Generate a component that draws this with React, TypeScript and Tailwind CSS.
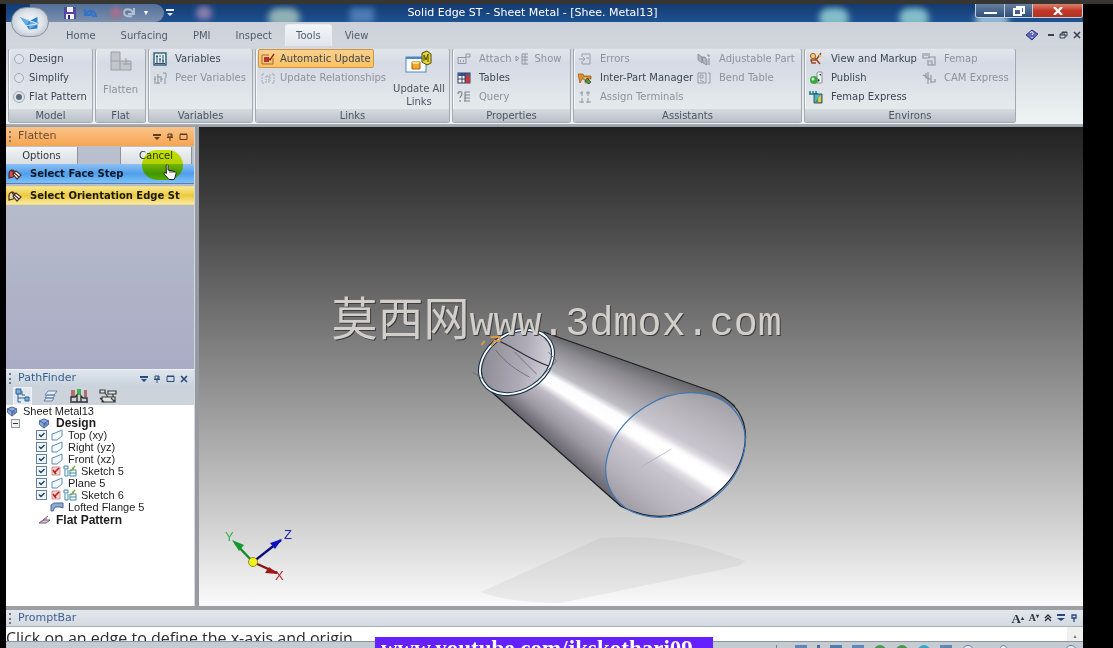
import React, { useState } from "react";

type IconProps = { name: string; className?: string };

const SmallIcon: React.FC<IconProps> = ({ name, className = "h-[14px] w-[14px]" }) => {
  const props = { viewBox: "0 0 14 14", className: `${className} shrink-0`, fill: "none", "aria-hidden": true };
  switch (name) {
    case "variables":
      return (
        <svg {...props}>
          <rect x="1" y="1" width="12" height="12" fill="#e4f0f5" stroke="#2c5d74" strokeWidth="1.4" />
          <path d="M4 3v8M3 4.5h2M7 3v2M7 6.5v4M6 7h2M10 3v8M9 9h2M2 11.5h10" stroke="#28516b" />
        </svg>
      );
    case "peer":
      return (
        <svg {...props} stroke="#8b939d">
          <path d="M2 5v8M5 3v10M8 5v6M10 2h3v5M12 7v6M1 8h2M4 6h3M7 8h3M3 12h4" />
        </svg>
      );
    case "auto":
      return (
        <svg {...props}>
          <path d="M1 3v9h11V6M1 3h7" stroke="#a5673a" />
          <rect x="3" y="5" width="5" height="5" fill="#b83232" />
          <path d="M7 6l2 2 4-6" stroke="#8c2d1c" strokeWidth="1.4" />
        </svg>
      );
    case "relations":
      return (
        <svg {...props} stroke="#a3abb4">
          <path d="M1 3h2M1 3v9h2M11 3h2M13 3v9h-2M5 5h3v4H5zM9 3v7M4 11h5" strokeDasharray="2 1" />
        </svg>
      );
    case "attach":
      return (
        <svg {...props} stroke="#8e96a0">
          <path d="M1 5.500h8v6H1zM3.500 8v2M6.500 8v2M9 2h4v3H9z" />
        </svg>
      );
    case "show":
      return (
        <svg {...props} stroke="#8e96a0">
          <path d="M1 4v5l3-2.500zM7 2h6M7 5h6M7 8h6M7 12h6M7 2v10M10 2v10" />
        </svg>
      );
    case "tables":
      return (
        <svg {...props}>
          <rect x="1" y="2" width="12" height="10" fill="#fff" stroke="#303c68" />
          <path d="M1 2h12v3H1z" fill="#38589a" />
          <path d="M8 4h5v8H8z" fill="#bc3c3c" />
          <path d="M5 2v10M8 2v10M1 8h7" stroke="#303c68" />
        </svg>
      );
    case "query":
      return (
        <svg {...props} stroke="#7d858f">
          <path d="M1 4c0-3 4-3 4-.5C5 6 3 6 3 8M3 10v2M8 2h5M8 5h5M8 8h5M7 11h6M8 2v9" strokeWidth="1.2" />
        </svg>
      );
    case "errors":
      return (
        <svg {...props} stroke="#98a0aa">
          <path d="M4 2h8v10H4V9M4 5V2M1 7h5M5 5l2 2-2 2M8 6h3" />
        </svg>
      );
    case "interpart":
      return (
        <svg {...props}>
          <path d="M0 3h5l1 2h7v3H4l-2 4z" fill="#e0912c" stroke="#9a4e12" strokeWidth=".7" />
          <path d="M5 6h5v6H7V8H5z" fill="#f4d765" stroke="#8a5a1c" strokeWidth=".6" />
          <path d="M9 7l4 4-2 2-4-3z" fill="#4d9b3a" stroke="#222" strokeWidth=".6" />
        </svg>
      );
    case "assign":
      return (
        <svg {...props} stroke="#8e96a0">
          <path d="M4 1v5M10 1v5M2 3h3M8 3h4M4 8v5M10 8v5M1 12h5M8 12h5" />
        </svg>
      );
    case "adjust":
      return (
        <svg {...props}>
          <path d="M1 2l4 3v6L1 8zM5 5h3l2 3v5L6 11z" fill="#aeb6bf" stroke="#818994" strokeWidth=".8" />
          <path d="M11 2v2M13 4h-2M12 6v3M11 10h2M12 11v2" stroke="#818994" />
        </svg>
      );
    case "bend":
      return (
        <svg {...props} stroke="#929aa4">
          <path d="M1 2h8v10H1zM3 4h3v3H3zM3 9l4 2M11 2h2M13 2v10h-2" />
        </svg>
      );
    case "markup":
      return (
        <svg {...props}>
          <circle cx="4" cy="4" r="2.6" fill="#f0c98c" stroke="#a16023" />
          <path d="M6 6l5 6M12 1L7 8H2l1 3h4" stroke="#9c4a20" strokeWidth="1.5" />
          <path d="M10 2l3 2-3 2z" fill="#e7c243" />
        </svg>
      );
    case "publish":
      return (
        <svg {...props}>
          <path d="M9 1h4v11H8V2z" fill="#eef1f5" stroke="#767e88" strokeWidth=".8" />
          <circle cx="5" cy="9" r="4" fill="#3fa647" />
          <circle cx="4" cy="8" r="1.5" fill="#c7efc3" />
          <path d="M9 8l2 1-2 2zM10 3h2v2" fill="#333" />
        </svg>
      );
    case "femapx":
      return (
        <svg {...props}>
          <path d="M0 4h9M1 1v3M4 1v3M7 1v3" stroke="#157f8a" strokeWidth="1.500" />
          <path d="M5 4h8v9H5z" fill="#4db7c3" stroke="#333" strokeWidth=".8" />
          <path d="M6 12l6-7v7z" fill="#f2c53a" />
          <path d="M6 12l3-4v4z" fill="#3e9a48" />
        </svg>
      );
    case "femap":
      return (
        <svg {...props} stroke="#8c949e">
          <path d="M1 1v5h6V1M3 1v3M5 1v3M7 5h6v8H6V8M7 9h3v4" strokeWidth="1.1" />
        </svg>
      );
    default:
      return (
        <svg {...props} stroke="#8c949e">
          <path d="M1 4l4 2M4 2v5h3M6 1v12M9 4v8M6 8h3M9 11h4v-3" strokeWidth="1.1" />
        </svg>
      );
  }
};

type Command = { icon: string; label: string; off?: boolean };

const CommandButton: React.FC<Command & { className?: string }> = ({ icon, label, off, className = "gap-2 px-1" }) => (
  <button
    disabled={off}
    className={`flex h-[19px] items-center whitespace-nowrap ${off ? "text-[#8d939b]" : "text-[#3d4651]"} ${className}`}
  >
    <SmallIcon name={icon} />
    {label}
  </button>
);

const Group: React.FC<{ title: string; className: string; children: React.ReactNode }> = ({ title, className, children }) => (
  <section
    className={`flex shrink-0 flex-col overflow-hidden rounded-[3px] border border-[#a2a9b3] border-t-[#d5dae0] bg-linear-to-b from-[#e2e6ec] via-[#d6dae4] via-20% to-[#e9efef] shadow-[inset_1px_0_0_#f4f7f9] ${className}`}
  >
    <div className="flex-1">{children}</div>
    <h2 className="h-[13px] bg-linear-to-b from-[#d6dbe0] to-[#bac0c8] text-center leading-[13px] text-[#4c5560]">{title}</h2>
  </section>
);

const tabs = ["Home", "Surfacing", "PMI", "Inspect", "Tools", "View"];
const modes = ["Design", "Simplify", "Flat Pattern"];

const TitleBar: React.FC = () => (
  <header className="relative flex h-[18px] shrink-0 items-center justify-center overflow-hidden bg-linear-to-b from-[#153b70] to-[#1d5293] pr-6">
    <div className="absolute inset-y-0 left-6 flex w-[134px] items-center gap-2 rounded-r-full bg-linear-to-b from-[#516f99] to-[#7b90ae] pl-[34px]">
      <button aria-label="Save">
        <svg viewBox="0 0 12 12" className="h-3 w-3">
          <path d="M0 0h12v12H0z" fill="#5346a3" />
          <path d="M3 0h6v5H3zM2 7h8v5H2z" fill="#f3f4ff" />
          <path d="M4 8h2v4H4z" fill="#322868" />
        </svg>
      </button>
      <button aria-label="Undo">
        <svg viewBox="0 0 14 12" className="h-3 w-[14px]" fill="none" stroke="#2e73c9" strokeWidth="2">
          <path d="M1 2v6h6M2 7c3-5 9-5 10 3M5 3l5 7" />
        </svg>
      </button>
      <span className="ml-1 h-3 w-3 rounded-full bg-[#a0708c] blur-[2px]" />
      <button aria-label="Redo" className="-ml-2">
        <svg viewBox="0 0 14 12" className="h-3 w-[14px]" fill="none" stroke="#b3bfd0" strokeWidth="2">
          <path d="M12 1v6H6M11 6C9 1 2 1 2 6c0 3 5 4 8 3" />
        </svg>
      </button>
      <span className="text-[8px] text-white">▾</span>
    </div>
    <svg viewBox="0 0 8 8" className="absolute left-[160px] h-2 w-2" fill="#e5ebf3" aria-hidden>
      <path d="M0 0h8v2H0zM1 4h6L4 7z" />
    </svg>
    <span className="absolute left-[190px] h-[14px] w-4 rounded-full bg-[#8a7fae] blur-[3px]" />
    <span className="absolute top-1 left-[262px] h-5 w-8 rounded-full bg-[#8fb0b4] blur-[3px]" />
    <span className="absolute top-1 left-[344px] h-4 w-6 bg-[#4d7cb4] blur-[3px]" />
    <span className="absolute top-1 right-[234px] h-5 w-[30px] rounded-full bg-[#82bdca] blur-[3px]" />
    <span className="absolute top-1 right-[154px] h-5 w-[30px] rounded-full bg-[#82bdca] blur-[3px]" />
    <span className="absolute top-2 right-[74px] h-4 w-[34px] rounded-full bg-[#8fb7d0] blur-[3px]" />
    <h1 className="text-[11px] text-white">Solid Edge ST - Sheet Metal - [Shee. Metal13]</h1>
    <div className="absolute top-0 right-0 flex h-[14px] overflow-hidden rounded-b-[3px] border border-t-0 border-[#c3cfdf]">
      <button aria-label="Minimize" className="flex w-[29px] items-end justify-center border-r border-[#c3cfdf] bg-linear-to-b from-[#66809f] to-[#2f4f79] pb-[3px]">
        <span className="h-[2px] w-[13px] bg-white" />
      </button>
      <button aria-label="Restore" className="flex w-[28px] items-center justify-center border-r border-[#c3cfdf] bg-linear-to-b from-[#66809f] to-[#2f4f79]">
        <svg viewBox="0 0 12 10" className="h-[10px] w-3" fill="none" stroke="#fff" strokeWidth="2">
          <path d="M4 3V1h7v6H9M1 3h7v6H1z" />
        </svg>
      </button>
      <button aria-label="Close" className="flex w-[49px] items-center justify-center bg-linear-to-b from-[#d98270] via-[#c2382a] to-[#b5321f]">
        <svg viewBox="0 0 10 8" className="h-2 w-[10px]" stroke="#fff" strokeWidth="2.4">
          <path d="M1 0l8 8M9 0L1 8" />
        </svg>
      </button>
    </div>
  </header>
);

const TabRow: React.FC<{ tab: string; onSelect: (t: string) => void }> = ({ tab, onSelect }) => (
  <nav className="flex h-[24px] shrink-0 items-end justify-between bg-linear-to-b from-[#ccd1d9] to-[#d2d7de]">
    <div className="flex h-[22px] gap-px pl-[48px]">
      {tabs.map((t) => (
        <button
          key={t}
          onClick={() => onSelect(t)}
          className={
            t === tab
              ? "rounded-t-[3px] border border-b-0 border-[#e9eef3] bg-linear-to-b from-[#f2f5f8] to-[#e2e6ec] px-[10px] text-[#515d6b]"
              : "px-[12px] text-[#515d6b]"
          }
        >
          {t}
        </button>
      ))}
    </div>
    <div className="flex h-[22px] items-center gap-[5px] pr-[2px]">
      <button aria-label="Help">
        <svg viewBox="0 0 14 12" className="mr-1 h-3 w-[14px]">
          <path d="M1 6l6-5 6 4-6 6z" fill="#6468b9" stroke="#323b89" />
          <path d="M5 4c1-2 4-1 3 1L7 6M7 8v1" stroke="#fff" fill="none" />
        </svg>
      </button>
      <button aria-label="Minimize document" className="h-[2px] w-[6px] bg-[#39424f]" />
      <button aria-label="Restore document">
        <svg viewBox="0 0 9 8" className="h-2 w-[9px]" fill="none" stroke="#39424f">
          <path d="M3 3V1h5v4H6M1 3h5v4H1zM1 4h5M3 1.5h5" />
        </svg>
      </button>
      <button aria-label="Close document">
        <svg viewBox="0 0 8 8" className="h-2 w-2" stroke="#39424f" strokeWidth="1.6">
          <path d="M1 1l6 6M7 1L1 7" />
        </svg>
      </button>
    </div>
  </nav>
);

const Ribbon: React.FC = () => {
  const [mode, setMode] = useState("Flat Pattern");

  return (
    <div className="flex h-[80px] shrink-0 gap-[2px] overflow-hidden border-b-2 border-[#a3aab3] bg-linear-to-b from-[#d0d5dc] to-[#eff5f4] px-[2px] pt-[2px] pb-px">
      <Group title="Model" className="w-[85px]">
        {modes.map((m) => (
          <label key={m} className="flex h-[19px] items-center gap-[5px] pl-[5px] whitespace-nowrap text-[#3d4651]">
            <input
              type="radio"
              name="model"
              checked={mode === m}
              onChange={() => setMode(m)}
              className="h-[10px] w-[10px] shrink-0 appearance-none rounded-full border border-[#a3abb6] bg-[#dfe4ea] checked:border-2 checked:border-[#dfe4ea] checked:bg-[#5b6878] checked:outline checked:outline-[#a3abb6]"
            />
            {m}
          </label>
        ))}
      </Group>
      <Group title="Flat" className="w-[51px]">
        <button disabled className="flex w-full flex-col items-center pt-[2px] text-[#8d939b]">
          <svg viewBox="0 0 26 22" className="h-[22px] w-[26px]" fill="#c2c6cb" stroke="#999ea6">
            <path d="M3 1h9v9h11v9H3zM12 10v9M12 10H3M18 7v7M15 13h8" />
          </svg>
          <span className="mt-[9px]">Flatten</span>
        </button>
      </Group>
      <Group title="Variables" className="w-[105px]">
        <CommandButton icon="variables" label="Variables" />
        <CommandButton icon="peer" label="Peer Variables" off />
      </Group>
      <Group title="Links" className="w-[195px]">
        <div className="flex items-start justify-between pl-[2px]">
          <div>
            <CommandButton
              icon="auto"
              label="Automatic Update"
              className="gap-[5px] rounded-[2px] border border-[#cf9540] bg-linear-to-b from-[#f9d08d] to-[#fbc362] px-[2px]"
            />
            <CommandButton icon="relations" label="Update Relationships" off className="gap-[5px] px-[3px]" />
          </div>
          <button className="flex w-[60px] shrink-0 flex-col items-center pt-px text-[#4b545f]">
            <svg viewBox="0 0 28 24" className="h-6 w-7">
              <rect x="1" y="7" width="20" height="15" fill="#fdfeff" stroke="#4c88bd" />
              <path d="M1 7h20v2H1z" fill="#4c88bd" />
              <path d="M7 12h8v7H7z" fill="#f5a72a" stroke="#a4620d" />
              <path d="M7 12h8l-2 2H8z" fill="#ffdf84" />
              <path d="M17 3l5-2 4 3v9l-4 2-5-3z" fill="#e5d52c" stroke="#4d4a12" />
              <path d="M19 11V5l2 5 2-6v8" fill="none" stroke="#4d4a12" />
            </svg>
            <span className="mt-[8px] leading-[13px]">
              Update All
              <br />
              Links
            </span>
          </button>
        </div>
      </Group>
      <Group title="Properties" className="w-[119px]">
        <div className="flex">
          <CommandButton icon="attach" label="Attach" off />
          <CommandButton icon="show" label="Show" off className="gap-[5px]" />
        </div>
        <CommandButton icon="tables" label="Tables" />
        <CommandButton icon="query" label="Query" off />
      </Group>
      <Group title="Assistants" className="w-[229px]">
        <div className="flex">
          <div className="w-[119px]">
            <CommandButton icon="errors" label="Errors" off />
            <CommandButton icon="interpart" label="Inter-Part Manager" />
            <CommandButton icon="assign" label="Assign Terminals" off />
          </div>
          <div>
            <CommandButton icon="adjust" label="Adjustable Part" off />
            <CommandButton icon="bend" label="Bend Table" off />
          </div>
        </div>
      </Group>
      <Group title="Environs" className="w-[212px]">
        <div className="flex">
          <div className="w-[113px]">
            <CommandButton icon="markup" label="View and Markup" />
            <CommandButton icon="publish" label="Publish" />
            <CommandButton icon="femapx" label="Femap Express" />
          </div>
          <div>
            <CommandButton icon="femap" label="Femap" off />
            <CommandButton icon="cam" label="CAM Express" off />
          </div>
        </div>
      </Group>
    </div>
  );
};

const Grip: React.FC = () => <span className="h-[11px] w-0 border-l-2 border-dotted border-[#6d7683]" />;

const PaneControls: React.FC<{ color: string; closable?: boolean }> = ({ color, closable }) => (
  <div className={`ml-auto flex items-center gap-[5px] ${color}`}>
    <button aria-label="Pane menu">
      <svg viewBox="0 0 8 8" className="h-2 w-2" fill="currentColor"><path d="M0 1h8v2H0zM1 4h6L4 7z" /></svg>
    </button>
    <button aria-label="Pin pane">
      <svg viewBox="0 0 8 8" className="h-2 w-2" fill="none" stroke="currentColor"><path d="M2 1h4v3H2zM1 4.500h6M4 5v3M5 1v3" /></svg>
    </button>
    <button aria-label="Float pane">
      <svg viewBox="0 0 9 8" className="h-2 w-[9px]" fill="none" stroke="currentColor"><path d="M1 1.500h7v5H1zM1 1h7" /></svg>
    </button>
    {closable && (
      <button aria-label="Close pane">
        <svg viewBox="0 0 8 8" className="h-2 w-2" stroke="currentColor" strokeWidth="1.6"><path d="M1 1l6 6M7 1L1 7" /></svg>
      </button>
    )}
  </div>
);

const StepIcon: React.FC<{ color: string }> = ({ color }) => (
  <svg viewBox="0 0 14 12" className="h-3 w-[14px] shrink-0" fill="none" stroke="#4d3029" strokeWidth="1.200">
    <path d="M1 10V6c0-3 2-4 4-4l3 3-3 4z" fill={color} />
    <path d="M5 6l3-3 5 4-4 4z" fill="#fff" />
    <path d="M3 2l8 7" />
  </svg>
);

const FlattenPane: React.FC = () => (
  <section className="flex flex-1 flex-col bg-linear-to-b from-[#bcc2cd] to-[#aaacc5]">
    <div className="flex h-[19px] items-center gap-[7px] bg-linear-to-b from-[#fac388] to-[#f6a550] pr-[6px] pl-[3px] text-[11px] text-[#6a4c30]">
      <Grip />
      Flatten
      <PaneControls color="text-[#5d3d1d]" />
    </div>
    <div className="relative flex h-[18px] justify-between pt-px pr-[2px] text-[#30363e]">
      <button className="w-[72px] border-r border-[#8c929b] bg-linear-to-b from-[#f3f5f7] to-[#d9dee2]">Options</button>
      <button className="w-[72px] border-x border-[#8c929b] bg-linear-to-b from-[#f3f5f7] to-[#d9dee2]">Cancel</button>
      <span className="pointer-events-none absolute top-[4px] right-[11px] z-10 h-[30px] w-[41px] rounded-full bg-[#d2f000] mix-blend-multiply" />
      <svg viewBox="0 0 14 16" className="pointer-events-none absolute top-[18px] right-[17px] z-20 h-4 w-[14px]">
        <path d="M3 1.500q1.500-1.500 2 0V6l7 1.500q1 .5 1 2l-1 4-1 2H6L1 10q-.5-1.500 1-1.500l1.500 1z" fill="#fff" stroke="#222" />
        <path d="M7 6v3M9 6.500V9M11 7v2" stroke="#222" strokeWidth=".8" />
      </svg>
    </div>
    <button className="flex h-[20px] items-center gap-2 overflow-hidden border-b border-[#5a81a8] bg-linear-to-b from-[#8dc0f5] via-[#4f9fec] to-[#7cc0f8] pl-[2px] font-bold whitespace-nowrap text-[#0c1624]">
      <StepIcon color="#d9484e" />
      Select Face Step
    </button>
    <button className="mt-[2px] flex h-[19px] items-center gap-2 overflow-hidden border-y border-[#f0dc90] bg-linear-to-b from-[#f8e98c] via-[#ecc93a] to-[#f8eb9c] pl-[2px] font-bold whitespace-nowrap text-[#1c1809]">
      <StepIcon color="#e9dca0" />
      Select Orientation Edge St
    </button>
  </section>
);

const nodes = [
  { label: "Top (xy)", kind: "plane" },
  { label: "Right (yz)", kind: "plane" },
  { label: "Front (xz)", kind: "plane" },
  { label: "Sketch 5", kind: "sketch" },
  { label: "Plane 5", kind: "plane" },
  { label: "Sketch 6", kind: "sketch" },
];

const PartIcon: React.FC = () => (
  <svg viewBox="0 0 12 12" className="h-[11px] w-3 shrink-0" stroke="#365491" strokeWidth=".9">
    <path d="M1 3l5-2 5 2v4l-5 4-5-4z" fill="#8dabdc" />
    <path d="M1 3l5 3 5-3M6 6v5" fill="none" />
    <path d="M6 7l3-1v2z" fill="#fff" />
  </svg>
);

const PathFinder: React.FC = () => (
  <section className="flex h-[237px] shrink-0 flex-col bg-white">
    <div className="flex h-[18px] items-center gap-[7px] border-t border-[#eef1f5] bg-linear-to-b from-[#dfe5ec] to-[#c9d2dd] pr-[6px] pl-[3px] text-[11px] text-[#385f8f]">
      <Grip />
      PathFinder
      <PaneControls color="text-[#284a7b]" closable />
    </div>
    <div className="flex h-[18px] items-center gap-[11px] bg-[#cdd3db] pl-[7px]">
      <button aria-label="Tree" className="border border-[#eef2f6] bg-[#e1e8ef]">
        <svg viewBox="0 0 17 16" className="h-4 w-[17px]" fill="#79abd9" stroke="#2d6192">
          <path d="M2 1h5v5H2zM11 9h4v4h-4z" />
          <path d="M4 6v8M4 10h7M4 14h3M8 3v4h3" fill="none" />
        </svg>
      </button>
      <button aria-label="Layers">
        <svg viewBox="0 0 16 14" className="h-[14px] w-4" fill="#e8eef8" stroke="#6780a9">
          <path d="M5 2h9l-3 4H2zM4 6h8l-2 3H2zM3 9h8l-2 3H1z" />
        </svg>
      </button>
      <button aria-label="Sensors">
        <svg viewBox="0 0 18 14" className="h-[14px] w-[18px]">
          <path d="M1 1h4v7H1z" fill="#b26c6c" /><path d="M7 0h4v6H7z" fill="#3db34b" /><path d="M14 1h3v7h-3z" fill="#b26c6c" />
          <path d="M1 12V8h4l2-2v7M11 13V7l2 2h4v4M0 13h18" fill="none" stroke="#333" strokeWidth="1.400" />
        </svg>
      </button>
      <button aria-label="Playback">
        <svg viewBox="0 0 18 14" className="h-[14px] w-[18px]" fill="#e5e5e0" stroke="#35383c" strokeWidth="1.200">
          <path d="M1 1h5v3H1zM9 2h8v3H9zM3 8h13v5H3zM6 4l3 4M14 5v3M1 9l4 4M12 9l4 4" />
        </svg>
      </button>
    </div>
    <ul className="flex-1 font-['Liberation_Sans',sans-serif] text-[11px] leading-[12px] text-[#1d1d1d]">
      <li className="flex h-[12px] items-center gap-[5px]"><PartIcon />Sheet Metal13</li>
      <li className="flex h-[12px] items-center pl-[5px] text-[12px] font-bold">
        <button aria-label="Collapse Design" className="mr-[18px] flex h-[9px] w-[9px] items-center justify-center border border-[#8f969e] bg-[#eff1f3]">
          <span className="h-px w-[5px] bg-[#333]" />
        </button>
        <PartIcon />
        <span className="ml-[6px]">Design</span>
      </li>
      {nodes.map((n) => (
        <li key={n.label} className="h-[12px]">
          <label className="flex h-[12px] items-center gap-[4px] pl-[30px]">
            <span className="relative h-[10px] w-[11px] shrink-0">
              <input type="checkbox" defaultChecked className="peer block h-[10px] w-[11px] appearance-none border border-[#64809c] bg-[#eef6fa]" />
              <svg viewBox="0 0 11 10" className="pointer-events-none absolute inset-0 hidden h-[10px] w-[11px] peer-checked:block" fill="none" stroke="#23415c" strokeWidth="1.500">
                <path d="M3 4.500l2 2L8.500 3" />
              </svg>
            </span>
            {n.kind === "plane" ? (
              <svg viewBox="0 0 12 12" className="mr-px h-3 w-3 shrink-0" fill="#f5faff" stroke="#5e8cb8">
                <path d="M1 5l3-1 7-3v6l-5 4H1z" />
              </svg>
            ) : (
              <svg viewBox="0 0 26 12" className="h-3 w-[26px] shrink-0" fill="none">
                <path d="M1 2h8v8H1z" fill="#f7dada" stroke="#cf7373" strokeWidth=".8" />
                <path d="M3 8l5-5M2 5l3 4" stroke="#bd1c1c" strokeWidth="1.600" />
                <path d="M13 1h4v3h-4zM14 5v6h3V5M19 11V5h6v6zM22 5V2M19 8h6" stroke="#4187a8" />
                <path d="M20 6l4-5" stroke="#90ad32" strokeWidth="1.500" />
              </svg>
            )}
            {n.label}
          </label>
        </li>
      ))}
      <li className="flex h-[12px] items-center gap-[4px] pl-[44px]">
        <svg viewBox="0 0 14 10" className="h-[10px] w-[14px] shrink-0" fill="#92a9cf" stroke="#48669c">
          <path d="M1 3l3-2h9v5l-3-1H5L3 9H1z" />
        </svg>
        Lofted Flange 5
      </li>
      <li className="flex h-[13px] items-center gap-[5px] pl-[32px] text-[12px] font-bold">
        <svg viewBox="0 0 13 10" className="h-[10px] w-[13px] shrink-0" fill="#d9cfe5" stroke="#6a5787">
          <path d="M1 8l4-3h7L8 8zM5 5l5-4" /><path d="M3 7l6-4" stroke="#c56a4a" />
        </svg>
        Flat Pattern
      </li>
    </ul>
  </section>
);

// shading across the cone, from the upper silhouette (0) to the lower one (1)
const shade = [
  [0, 104, 103, 106],
  [0.12, 136, 135, 140],
  [0.28, 168, 166, 172],
  [0.4, 190, 188, 196],
  [0.46, 252, 252, 255],
  [0.56, 255, 255, 255],
  [0.64, 192, 188, 198],
  [0.82, 156, 152, 162],
  [1, 98, 96, 104],
];

const shadeAt = (t: number) => {
  const i = Math.max(1, shade.findIndex((s) => s[0] >= t));
  const a = shade[i - 1];
  const b = shade[i];
  const k = (t - a[0]) / (b[0] - a[0]);
  return `rgb(${[1, 2, 3].map((c) => Math.round(a[c] + (b[c] - a[c]) * k)).join(",")})`;
};

const STRIPS = 90;
const near = (t: number) => [552 - 58 * t, 335 + 58 * t];
const far = (t: number) => {
  const [x, y] = near(t);
  return [x + (728 - 113 * t - x) * 1.8, y + (397 + 109 * t - y) * 1.8];
};

const strips = Array.from({ length: STRIPS }, (_, i) => {
  const t0 = i === 0 ? -0.1 : i / STRIPS;
  const t1 = i === STRIPS - 1 ? 1.1 : (i + 1.6) / STRIPS;
  return {
    fill: shadeAt((i + 0.5) / STRIPS),
    points: [near(t0), far(t0), far(t1), near(t1)].map((p) => p.join(",")).join(" "),
  };
});

const glare = [near(0.46), far(0.46), far(0.57), near(0.57)].map((p) => p.join(",")).join(" ");

const ConeModel: React.FC = () => (
  <svg viewBox="199 127 883 479" className="absolute inset-0 h-full w-full" role="img" aria-label="Lofted flange">
    <defs>
      <clipPath id="cone">
        <path d="M543 332L716 393L735 405L640 514L620 506L489 390Z" />
        <ellipse cx="675" cy="455" rx="74" ry="57" transform="rotate(-32 675 455)" />
      </clipPath>
      <clipPath id="opening">
        <ellipse cx="675" cy="455" rx="74" ry="57" transform="rotate(-32 675 455)" />
      </clipPath>
      <filter id="soft" x="-10%" y="-10%" width="120%" height="120%">
        <feGaussianBlur stdDeviation="2" />
      </filter>
      <linearGradient id="mouth" x1="490" y1="340" x2="540" y2="385" gradientUnits="userSpaceOnUse">
        <stop offset="0" stopColor="#8d8b93" />
        <stop offset=".6" stopColor="#aeabb7" />
        <stop offset="1" stopColor="#d2d0d8" />
      </linearGradient>
      <linearGradient id="shadow" x1="0" y1="537" x2="0" y2="603" gradientUnits="userSpaceOnUse">
        <stop offset="0" stopColor="#cfcfcf" />
        <stop offset="1" stopColor="#ececec" />
      </linearGradient>
    </defs>
    <path d="M480 592L600 538Q650 534 700 546L745 561L738 566L560 603Q510 603 480 592Z" fill="url(#shadow)" />
    <g clipPath="url(#cone)">
      {strips.map((s, i) => (
        <polygon key={i} points={s.points} fill={s.fill} />
      ))}
    </g>
    <g clipPath="url(#opening)">
      <ellipse cx="675" cy="455" rx="74" ry="57" transform="rotate(-32 675 455)" fill="#d2ced7" fillOpacity=".5" />
      <polygon points={glare} fill="#fff" filter="url(#soft)" />
    </g>
    <path d="M543 332L716 393Q745 408 745 437C744 470 722 494 694 508C667 521 643 518 620 506L489 390" fill="none" stroke="#1b2027" strokeWidth="1.300" />
    <ellipse cx="675" cy="455" rx="74" ry="57" transform="rotate(-32 675 455)" fill="none" stroke="#3f78b5" strokeWidth="1.200" />
    <path d="M642 466L671 449" stroke="#a9a6af" strokeWidth=".7" />
    <ellipse cx="516" cy="362" rx="39" ry="29" transform="rotate(-32 516 362)" fill="url(#mouth)" stroke="#17324b" strokeWidth="4" />
    <ellipse cx="516" cy="362" rx="39" ry="29" transform="rotate(-32 516 362)" fill="none" stroke="#fff" strokeWidth="1.800" />
    <path d="M496 340C512 346 525 358 548 366" fill="none" stroke="#2c2c33" strokeWidth="1.100" />
    <path d="M495 350C504 362 517 371 529 377M514 352L536 374M472 372L484 380M548 352L556 361L542 376" fill="none" stroke="#65646e" strokeWidth=".8" />
    <path d="M490 337h9v4h-5l-3 5M481 345l3-4" fill="none" stroke="#d99846" strokeWidth="2" />
  </svg>
);

const AxisTriad: React.FC = () => (
  <svg viewBox="0 0 76 56" className="absolute bottom-[22px] left-[22px] h-[56px] w-[76px]" strokeWidth="2.400">
    <path d="M32 34L14 15" stroke="#168a2d" /><path d="M11 12l12 5-5 6z" fill="#15992d" />
    <path d="M32 34L60 12" stroke="#0a0a80" /><path d="M61 11l-12 4 5 6z" fill="#0e12c4" />
    <path d="M32 34L56 45" stroke="#841616" /><path d="M57 46l-13-1 4-6z" fill="#a11515" />
    <circle cx="32" cy="34" r="4.500" fill="#f3f024" stroke="#8f9410" strokeWidth="1" />
    <g className="font-['Liberation_Sans',sans-serif] text-[13px]">
      <text x="4" y="13" fill="#36b34a">Y</text>
      <text x="63" y="11" fill="#2524a0">Z</text>
      <text x="54" y="52" fill="#b82222">X</text>
    </g>
  </svg>
);

const PromptBar: React.FC = () => (
  <footer className="shrink-0 border-t-4 border-[#9c9fa4] bg-white">
    <div className="flex h-[17px] items-center gap-[7px] border-b border-[#aab0b8] bg-linear-to-b from-[#e3e8ed] to-[#d4dae0] pr-[5px] pl-[3px] text-[11px] text-[#3f5f93]">
      <Grip />
      PromptBar
      <div className="ml-auto flex items-center gap-[5px] font-['Liberation_Serif',serif] text-[#28303c]">
        <button className="text-[13px] leading-none font-bold">A<sup className="text-[6px]">▴</sup></button>
        <button className="text-[10px] leading-none font-bold">A<sup className="text-[6px]">▾</sup></button>
        <button aria-label="Collapse">
          <svg viewBox="0 0 8 8" className="h-2 w-2" fill="none" stroke="currentColor" strokeWidth="1.300"><path d="M1 4l3-3 3 3M1 7l3-3 3 3" /></svg>
        </button>
        <button aria-label="Prompt menu" className="text-[#254883]">
          <svg viewBox="0 0 8 8" className="h-2 w-2" fill="currentColor"><path d="M0 0h8v2H0zM0 4h8L4 7z" /></svg>
        </button>
        <button aria-label="Pin prompt" className="text-[#254883]">
          <svg viewBox="0 0 8 8" className="h-2 w-2" fill="none" stroke="currentColor" strokeWidth="1.300"><path d="M2 1h4v3H2zM4 4v4" /></svg>
        </button>
      </div>
    </div>
    <div className="flex h-[14px] justify-between overflow-hidden">
      <p className="font-['Open_Sans',sans-serif] text-[16px] leading-[22px] whitespace-nowrap text-[#2b2b2b]">
        Click on an edge to define the x-axis and origin
      </p>
      <span className="w-4 bg-[#f0f0ee] pt-1 text-center text-[6px] text-[#777]">▴</span>
    </div>
    <div className="flex h-[7px] items-start overflow-hidden border-t border-[#8f959d] bg-[#c5cbd3] pt-[3px]">
      <div className="ml-auto flex gap-[10px] pr-[6px]">
        <span className="mr-2 h-3 w-px bg-[#7a828c]" />
        <span className="h-3 w-3 bg-[#5e86b8]" />
        <span className="h-3 w-[3px] bg-[#4c6f9e]" />
        <span className="h-3 w-3 bg-[#4f7daf]" />
        <span className="h-3 w-3 bg-[#5e86b8]" />
        <span className="h-3 w-3 rounded-full bg-[#4b9a50]" />
        <span className="h-3 w-3 rounded-full bg-[#4a9452]" />
        <span className="h-3 w-3 rounded-full bg-[#35a5c7]" />
        <span className="h-3 w-3 bg-[#6185b1]" />
        <span className="h-3 w-3 rounded-full border border-[#657f9f] bg-[#e6edf4]" />
        <span className="ml-4 h-3 w-[7px] rounded-t border border-[#657f9f] bg-white" />
        <span className="ml-[48px] h-3 w-3 rounded-full border border-[#657f9f] bg-[#e6edf4]" />
      </div>
    </div>
  </footer>
);

const App: React.FC = () => {
  const [tab, setTab] = useState("Tools");

  return (
    <div className="relative h-screen overflow-hidden border-t-4 border-[#383632] bg-black pr-[30px] pl-[6px] font-['DejaVu_Sans',sans-serif] text-[10px]">
      <div className="relative flex h-full flex-col overflow-hidden">
        <TitleBar />
        <TabRow tab={tab} onSelect={setTab} />
        <button
          aria-label="Application menu"
          className="absolute top-[3px] left-[5px] h-[30px] w-[38px] rounded-full border border-[#8590a0] bg-radial from-[#fafcff] via-[#dfe4ea] to-[#a5afbb]"
        >
          <svg viewBox="0 0 38 30" className="h-full w-full">
            <path d="M8 9l11 4 8-4v13l-9 1z" fill="#3580c5" />
            <path d="M8 9l11 4-4 6zM19 13l10 3-11 7z" fill="#64ace4" />
            <path d="M8 9l19 8M19 13l8-4M15 19l12-2" stroke="#dff0fb" fill="none" />
          </svg>
        </button>
        <Ribbon />
        <main className="flex min-h-0 flex-1 bg-[#969aa1] pt-px">
          <aside className="flex w-[189px] shrink-0 flex-col border-r border-[#d5d8dd]">
            <FlattenPane />
            <PathFinder />
          </aside>
          <div className="relative ml-[4px] flex-1 overflow-hidden bg-linear-to-b from-[#222] via-[#777] via-42% to-[#fafafa]">
            <ConeModel />
            <AxisTriad />
            <p className="absolute top-[35%] left-[15%] flex items-baseline font-['Liberation_Mono','Noto_Sans_CJK_SC',monospace] text-[40px] leading-[56px] whitespace-nowrap text-[#d2cfcb] [text-shadow:1px_1px_0_#3c3c3c]">
              <span className="text-[46px]">莫西网</span>www.3dmox.com
            </p>
          </div>
        </main>
        <PromptBar />
      </div>
      <a
        href="#channel"
        className="absolute -bottom-[15px] left-[375px] h-[26px] w-[338px] bg-[#6420ff] pl-[6px] font-['Liberation_Serif',serif] text-[23px] leading-[24px] font-bold whitespace-nowrap text-white"
      >
        www.youtube.com/jkskothari09
      </a>
    </div>
  );
};

export default App;
